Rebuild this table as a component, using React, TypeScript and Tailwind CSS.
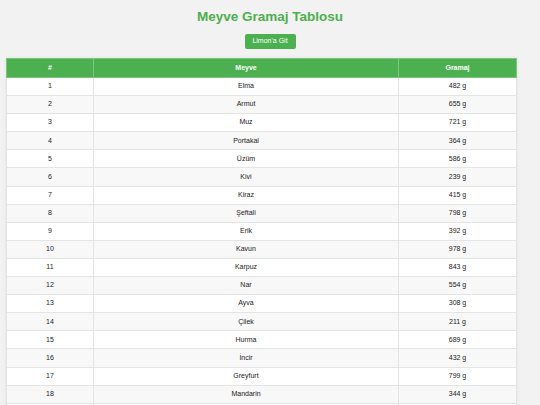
const FRUITS: [string, number][] = [
  ['Elma', 482],
  ['Armut', 655],
  ['Muz', 721],
  ['Portakal', 364],
  ['Üzüm', 586],
  ['Kivi', 239],
  ['Kiraz', 415],
  ['Şeftali', 798],
  ['Erik', 392],
  ['Kavun', 978],
  ['Karpuz', 843],
  ['Nar', 554],
  ['Ayva', 308],
  ['Çilek', 211],
  ['Hurma', 689],
  ['İncir', 432],
  ['Greyfurt', 799],
  ['Mandarin', 344],
  ['Ananas', 512],
  ['Mango', 467],
];

export default function App() {
  return (
    <div className="min-h-screen bg-[#f2f2f2] px-[6px] pt-[8px] font-['Liberation_Sans',Arial,sans-serif]">
      <h1 className="text-center text-[13.5px] font-bold leading-[18px] text-[#4caf50]">Meyve Gramaj Tablosu</h1>
      <div className="mt-[8px] flex justify-center">
        <button className="h-[15px] w-[51px] rounded-[2px] bg-[#4caf50] text-[7px] text-white">Limon'a Git</button>
      </div>
      <table className="mt-[9px] w-[511px] border-collapse bg-white text-center text-[7px] text-[#222] shadow-[0_0_3px_rgba(0,0,0,0.08)]">
        <thead>
          <tr className="h-[19px] bg-[#4caf50] text-white">
            <th className="w-[87px] border border-[#7cc47f] font-bold">#</th>
            <th className="w-[305px] border border-[#7cc47f] font-bold">Meyve</th>
            <th className="border border-[#7cc47f] font-bold">Gramaj</th>
          </tr>
        </thead>
        <tbody>
          {FRUITS.map(([name, g], i) => (
            <tr key={name} className={i % 2 === 1 ? 'h-[18.1px] bg-[#f8f8f8]' : 'h-[18.1px] bg-white'}>
              <td className="border border-[#e4e4e4]">{i + 1}</td>
              <td className="border border-[#e4e4e4]">{name}</td>
              <td className="border border-[#e4e4e4]">{g} g</td>
            </tr>
          ))}
        </tbody>
      </table>
    </div>
  );
}
